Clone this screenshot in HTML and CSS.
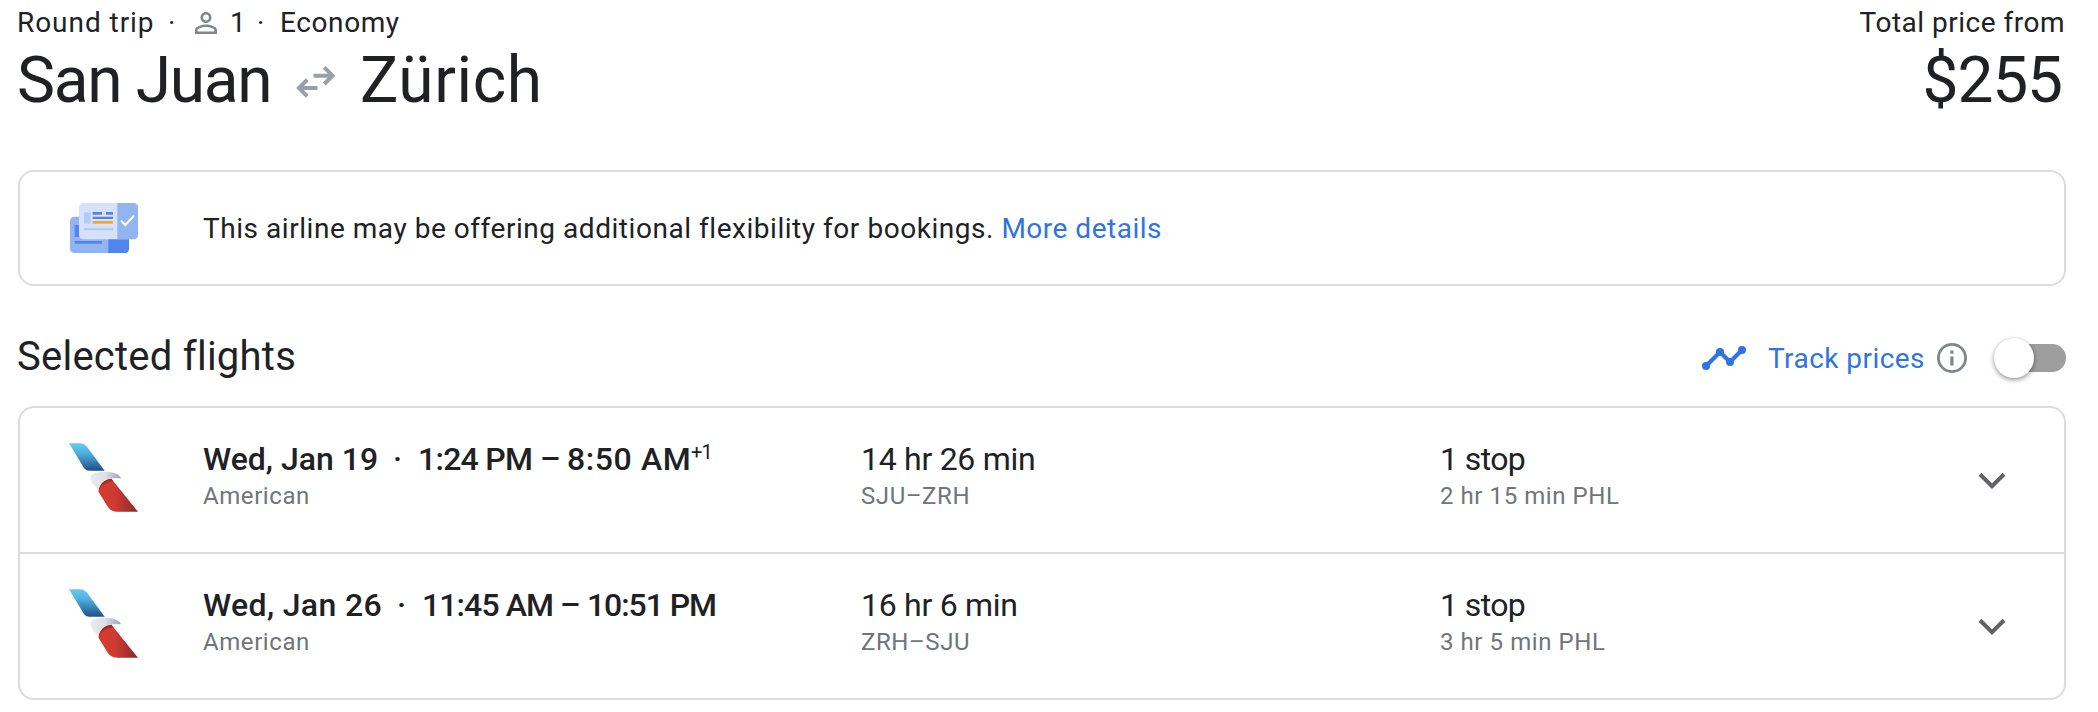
FILE: index.html
```html
<!DOCTYPE html>
<html lang="en">
<head>
<meta charset="utf-8">
<title>San Juan to Zürich</title>
<link rel="stylesheet" href="styles.css">
</head>
<body>
<svg class="defs" width="0" height="0" aria-hidden="true">
  <defs>
    <linearGradient id="tail-blue" x1="0" y1="0" x2="0" y2="1"><stop offset="0" stop-color="#65caf2"/><stop offset=".35" stop-color="#4fb2df"/><stop offset="1" stop-color="#1f4f8a"/></linearGradient>
    <linearGradient id="tail-grey" x1="0" y1="0" x2="1" y2="0"><stop offset="0" stop-color="#e9edf0"/><stop offset=".5" stop-color="#dbe0e4"/><stop offset="1" stop-color="#98a3ab"/></linearGradient>
    <linearGradient id="tail-red" x1="0" y1="0" x2="1" y2="0"><stop offset="0" stop-color="#d63c31"/><stop offset=".4" stop-color="#cf3a31"/><stop offset="1" stop-color="#8a2a2b"/></linearGradient>
    <symbol id="airline" viewBox="57 39 205 204">
      <path fill="url(#tail-blue)" d="M57 39H88Q102 39 110 49L163 121H118Q107 121 101 112Z"/>
      <path fill="url(#tail-grey)" d="M120 142C120 130 138 124 162 124C190 124 205 131 212 143H183C160 147 146 160 145 184C138 168 121 157 120 142Z"/>
      <path fill="url(#tail-red)" d="M145 184C146 162 162 147 183 145L262 243H200Q181 242 172 228Z"/>
      <path fill="#a52b28" d="M145 184C146 162 162 147 183 145L188 152C165 155 150 165 145 184Z"/>
    </symbol>
    <symbol id="chevron" viewBox="0 0 28 17"><path d="M2 2.3L14 14.1L26 2.3" fill="none" stroke="#5f6368" stroke-width="4"/></symbol>
  </defs>
</svg>
<main class="page">
  <header class="header">
    <div class="trip">
      <div class="meta">
        <span class="meta-type">Round trip</span><span class="meta-dot">·</span>
        <svg class="person" viewBox="4 4 16 16"><path fill="#80868b" d="M12 5.9a2.1 2.1 0 1 1 0 4.2 2.1 2.1 0 0 1 0-4.2m0 9c2.97 0 6.1 1.46 6.1 2.1v1.1H5.9V17c0-.64 3.13-2.1 6.1-2.1M12 4C9.79 4 8 5.79 8 8s1.79 4 4 4 4-1.79 4-4-1.79-4-4-4zm0 9c-2.67 0-8 1.34-8 4v3h16v-3c0-2.66-5.33-4-8-4z"/></svg>
        <span class="meta-count">1</span><span class="meta-dot">·</span><span class="meta-class">Economy</span>
      </div>
      <h1 class="route"><span class="origin">San Juan</span><svg class="swap" viewBox="0 0 40 32"><path d="M17.5 9.7H36M28.2 1.4L36.5 9.7L28.2 18M21.5 22H3.5M11.3 13.7L3 22L11.3 30.3" fill="none" stroke="#9aa0a6" stroke-width="4"/></svg><span class="destination">Zürich</span></h1>
    </div>
    <div class="total">
      <div class="total-label">Total price from</div>
      <div class="total-price">$255</div>
    </div>
  </header>

  <section class="card notice">
    <svg class="tickets" viewBox="0 0 204 150">
      <rect y="41" width="177" height="109" rx="13" fill="#93b4f3"/>
      <path fill="#4f86ec" d="M115 90H177V137a13 13 0 0 1-13 13H115zM14 66H50V102H14zM14 114H96V122H14z"/>
      <rect x="27" width="177" height="109" rx="13" fill="#d6e2fa"/>
      <path fill="#92b4f3" d="M142 0H191a13 13 0 0 1 13 13V96a13 13 0 0 1-13 13H142z"/>
      <path fill="#b3cbf7" d="M42 28H62V62H42zM42 75H129V82H42z"/>
      <path fill="#5884e0" d="M68 27H96V35H68zM108 27H129V35H108zM68 41H129V48H68z"/>
      <path fill="#f2a73b" d="M68 54H129V62H68z"/>
      <path d="M153 53L166 66L192 38" fill="none" stroke="#fff" stroke-width="6"/>
    </svg>
    <p class="notice-text">This airline may be offering additional flexibility for bookings. <a class="link">More details</a></p>
  </section>

  <div class="section-head">
    <h2 class="section-title">Selected flights</h2>
    <div class="track">
      <svg class="trend" viewBox="0 0 44 24"><path d="M4 20L18 6L28 16L40 4" fill="none" stroke="#2f74e0" stroke-width="4.2"/><g fill="#2f74e0"><circle cx="4" cy="20" r="4"/><circle cx="18" cy="6" r="4"/><circle cx="28" cy="16" r="4"/><circle cx="40" cy="4" r="4"/></g></svg>
      <span class="track-label">Track prices</span>
      <svg class="info" viewBox="0 0 30 30"><circle cx="15" cy="15" r="13.6" fill="none" stroke="#80868b" stroke-width="2.8"/><path fill="#80868b" d="M13.3 7.5h3.2v3.2h-3.2zM13.3 13.5h3.2v9h-3.2z"/></svg>
      <span class="toggle"><span class="knob"></span></span>
    </div>
  </div>

  <section class="card flights">
    <article class="flight">
      <svg class="airline"><use href="#airline"/></svg>
      <div class="cell"><div class="times"><span class="date d19">Wed, Jan 19</span><span class="sep">·</span><span class="t124">1:24 PM</span><span class="dash">–</span><span class="t850">8:50 AM</span><span class="plus">+1</span></div><div class="sub">American</div></div>
      <div class="cell"><div class="value">14 hr 26 min</div><div class="sub">SJU–ZRH</div></div>
      <div class="cell"><div class="value stops">1 stop</div><div class="sub">2 hr 15 min PHL</div></div>
      <svg class="chevron"><use href="#chevron"/></svg>
    </article>
    <article class="flight">
      <svg class="airline"><use href="#airline"/></svg>
      <div class="cell"><div class="times"><span class="date d26">Wed, Jan 26</span><span class="sep">·</span><span class="t1145">11:45 AM</span><span class="dash">–</span><span class="t1051">10:51 PM</span></div><div class="sub">American</div></div>
      <div class="cell"><div class="value">16 hr 6 min</div><div class="sub">ZRH–SJU</div></div>
      <div class="cell"><div class="value stops">1 stop</div><div class="sub">3 hr 5 min PHL</div></div>
      <svg class="chevron"><use href="#chevron"/></svg>
    </article>
  </section>
</main>
</body>
</html>
```
FILE: styles.css
```css
* { box-sizing: border-box; }
body { margin: 0; background: #fff; color: #202124; font-family: Roboto, "Liberation Sans", sans-serif; font-size: 28px; }
h1, h2, p { margin: 0; font-weight: 400; }
svg { display: block; flex: none; }
.defs { position: absolute; }
.page { height: 712px; padding: 6px 32px 0 17px; overflow: hidden; }

.header { display: flex; justify-content: space-between; height: 164px; white-space: nowrap; }
.meta { display: grid; grid-template-columns: 151px 27px 35px 27px 23px auto; align-items: center; height: 33px; line-height: 33px; }
.meta-type { letter-spacing: .95px; }
.meta-class { letter-spacing: .6px; }
.person { width: 22px; height: 22px; }
.route { display: flex; height: 76px; line-height: 76px; margin-top: 4px; font-size: 64px; }
.origin { width: 279px; letter-spacing: -1.3px; }
.swap { width: 40px; height: 32px; margin: 23px 24px 0 0; }
.destination { letter-spacing: .6px; }
.total { text-align: right; }
.total-label { height: 33px; line-height: 33px; margin-right: 1px; letter-spacing: .5px; }
.total-price { height: 76px; line-height: 76px; margin: 4px 4px 0 0; font-size: 64px; letter-spacing: -1.1px; }

.card { margin-left: 1px; border: 2px solid #dadce0; border-radius: 16px; }
.notice { display: flex; align-items: center; height: 116px; padding-left: 50px; }
.tickets { width: 68px; height: 50px; }
.notice-text { margin-left: 65px; letter-spacing: .54px; }
.link { color: #2f74e0; letter-spacing: .5px; }

.section-head { display: flex; justify-content: space-between; height: 120px; padding-top: 46px; }
.section-title { height: 50px; line-height: 50px; font-size: 40px; letter-spacing: .24px; }
.track { display: flex; align-items: center; height: 52px; }
.trend { width: 44px; height: 24px; }
.track-label { width: 169px; margin-left: 22px; color: #2f74e0; letter-spacing: .44px; }
.info { width: 30px; height: 30px; }
.toggle { width: 66px; height: 28px; margin-left: 33px; border-radius: 14px; background: #9e9e9e; }
.knob { display: block; width: 40px; height: 40px; margin: -6px 0 0 -6px; border-radius: 50%; background: #fff; box-shadow: 0 2px 5px rgba(0, 0, 0, .4), 0 0 2px rgba(0, 0, 0, .12); }

.flights { height: 294px; }
.flight { display: grid; grid-template-columns: 134px 658px 579px 538px 28px; height: 144px; padding: 32px 0 0 49px; }
.flight + .flight { height: 146px; border-top: 2px solid #dadce0; }
.airline { width: 69px; height: 69px; margin-top: 3px; }
.times, .value { display: flex; height: 38px; line-height: 38px; font-size: 32px; white-space: nowrap; }
.times { font-weight: 500; }
.value { letter-spacing: -.28px; }
.stops { letter-spacing: -.6px; }
.sep { width: 25px; }
.date { width: 190px; }
.d19 { letter-spacing: 0; }
.d26 { width: 194px; letter-spacing: .35px; }
.t124 { width: 122px; letter-spacing: -.73px; }
.t1145 { width: 138px; letter-spacing: -.9px; }
.t850 { width: 124px; letter-spacing: .6px; }
.t1051 { letter-spacing: -1.08px; }
.dash { width: 27px; }
.plus { height: 24px; line-height: 24px; font-size: 20px; font-weight: 400; letter-spacing: -.8px; }
.sub { height: 30px; line-height: 30px; margin-top: 3px; color: #70757a; font-size: 24px; letter-spacing: .57px; }
.chevron { width: 28px; height: 17px; margin-top: 32px; }
```
